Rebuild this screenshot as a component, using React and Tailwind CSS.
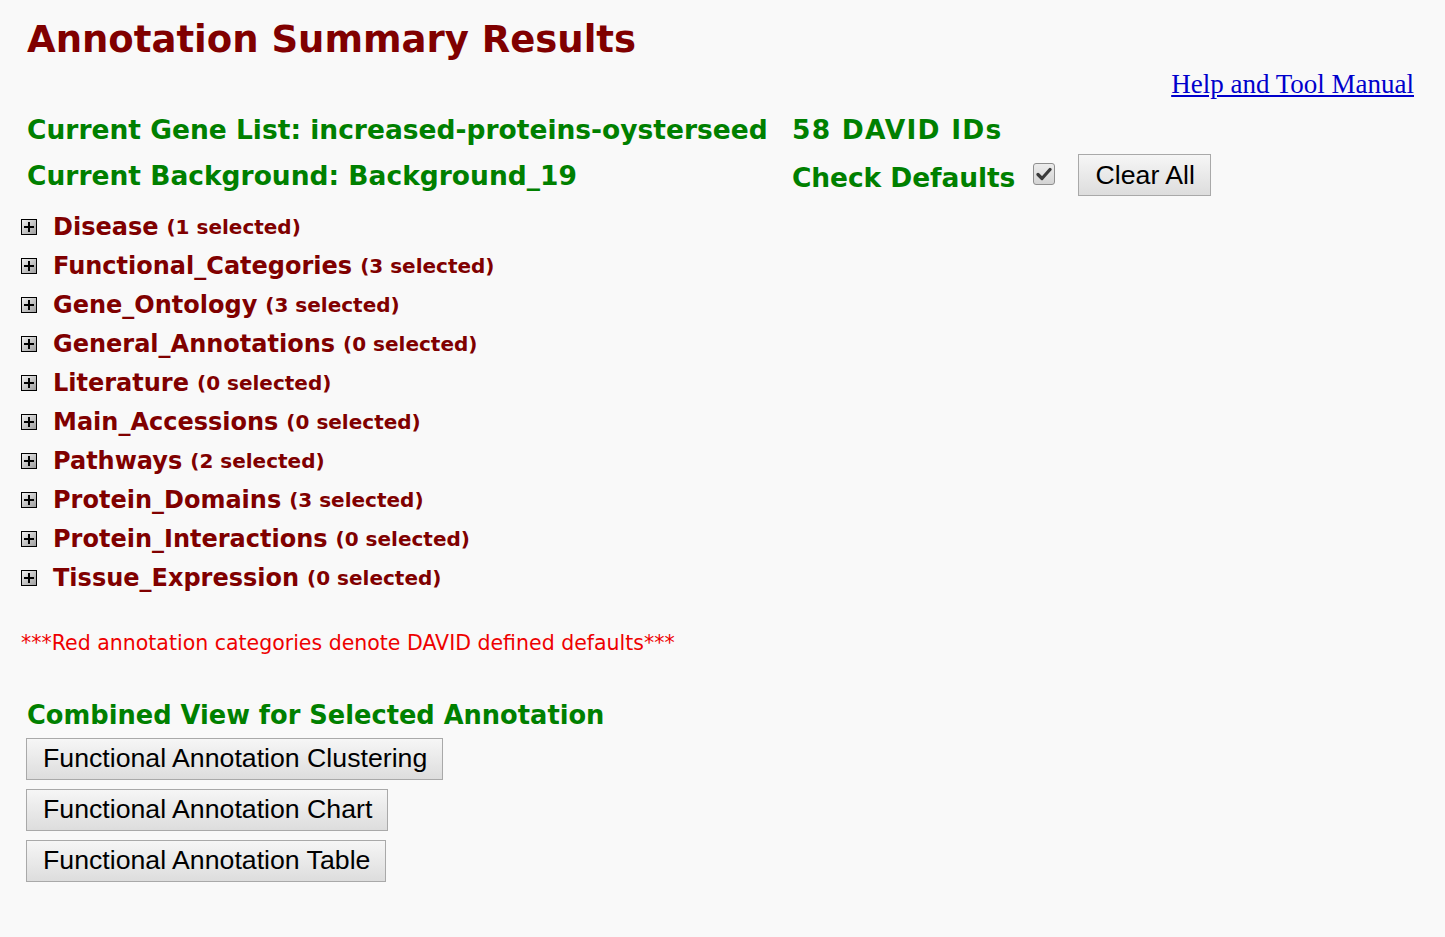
import React from "react";

const cats = [
  ["Disease", "1"],
  ["Functional_Categories", "3"],
  ["Gene_Ontology", "3"],
  ["General_Annotations", "0"],
  ["Literature", "0"],
  ["Main_Accessions", "0"],
  ["Pathways", "2"],
  ["Protein_Domains", "3"],
  ["Protein_Interactions", "0"],
  ["Tissue_Expression", "0"],
];

function PlusBox() {
  return (
    <svg width="16" height="16" viewBox="0 0 16 16" className="shrink-0">
      <defs>
        <linearGradient id="pb" x1="0" y1="0" x2="1" y2="1">
          <stop offset="0" stopColor="#f4f4f4" />
          <stop offset="1" stopColor="#9a9a9a" />
        </linearGradient>
      </defs>
      <rect x="0.5" y="0.5" width="15" height="15" fill="url(#pb)" stroke="#000" />
      <rect x="7" y="3" width="2" height="10" fill="#000" />
      <rect x="3" y="7" width="10" height="2" fill="#000" />
    </svg>
  );
}

function Btn({ children, className = "" }) {
  return (
    <button
      className={
        "h-[42px] border border-[#a9a9a9] bg-gradient-to-b from-[#f6f6f6] to-[#dddddd] pl-[16px] pr-[15px] text-[26.7px] leading-none text-black font-['Liberation_Sans',Arial,sans-serif] " +
        className
      }
    >
      {children}
    </button>
  );
}

export default function App() {
  const verdana = "font-['DejaVu_Sans',Verdana,sans-serif]";
  return (
    <div className={"min-h-[937px] w-full bg-[#f9f9f9] " + verdana}>
      <div className="pl-[27px] pr-[31px] pt-[16px]">
        <h1 className="text-[37px] font-bold leading-[48px] text-[#800000]">
          Annotation Summary Results
        </h1>
        <div className="mt-[4px] flex justify-end">
          <a
            href="#"
            className="font-['Liberation_Serif','Times_New_Roman',serif] text-[27px] leading-[32px] text-[#0000cc] underline"
          >
            Help and Tool Manual
          </a>
        </div>
        <div className="mt-[7px] grid grid-cols-[765px_auto] text-[26.5px] font-bold text-[#008000]">
          <div className="leading-[46px]">Current Gene List: increased-proteins-oysterseed</div>
          <div className="leading-[46px] tracking-[1.2px]">58 DAVID IDs</div>
          <div className="leading-[46px]">Current Background: Background_19</div>
          <div className="flex h-[46px] items-start">
            <span className="pt-[2px] leading-[46px] tracking-[-0.1px]">Check Defaults</span>
            <span className="ml-[18px] mt-[10px] flex h-[22px] w-[22px] items-center justify-center rounded-[3px] border border-[#8f8f8f] bg-gradient-to-b from-[#ececec] to-[#d4d4d4]">
              <svg width="16" height="14" viewBox="0 0 16 14">
                <path d="M2 7.5 L6 11.5 L14 2.5" fill="none" stroke="#3a3a3a" strokeWidth="3.2" strokeLinecap="round" strokeLinejoin="round" />
              </svg>
            </span>
            <Btn className="ml-[23px] mt-[1px] w-[133px] font-normal tracking-normal">Clear All</Btn>
          </div>
        </div>
      </div>

      <div className="mt-[8px] flex flex-col pl-[21px]">
        {cats.map(([n, c]) => (
          <div key={n} className="flex h-[39px] items-center">
            <PlusBox />
            <span className="ml-[16px] text-[24px] font-bold text-[#800000]">{n}</span>
            <span className="ml-[8px] text-[20px] font-bold text-[#800000]">({c} selected)</span>
          </div>
        ))}
      </div>

      <div className="mt-[31px] pl-[21px] text-[20.5px] text-[#ee0000]">
        ***Red annotation categories denote DAVID defined defaults***
      </div>

      <div className="mt-[38px] pl-[27px] text-[25.7px] font-bold leading-[36px] text-[#008000]">
        Combined View for Selected Annotation
      </div>
      <div className="mt-[5px] flex flex-col items-start gap-[9px] pl-[26px]">
        <Btn>Functional Annotation Clustering</Btn>
        <Btn>Functional Annotation Chart</Btn>
        <Btn>Functional Annotation Table</Btn>
      </div>
    </div>
  );
}
